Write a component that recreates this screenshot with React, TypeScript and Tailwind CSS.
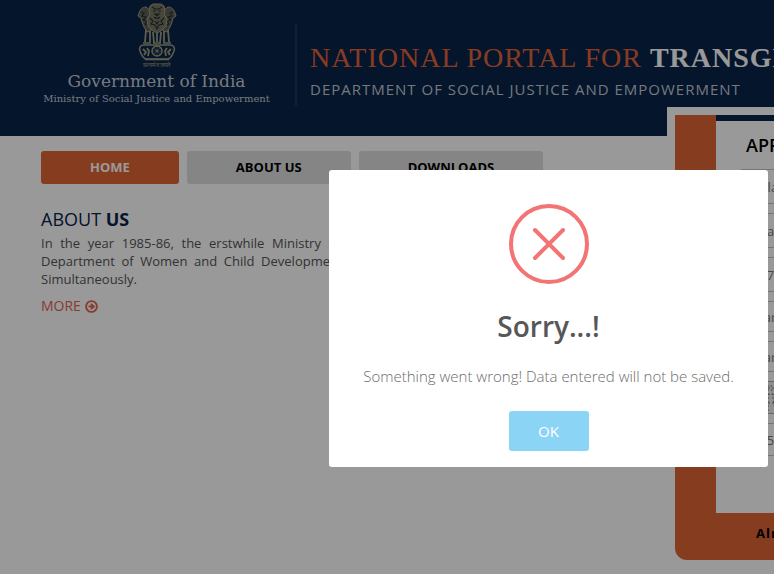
import { CircleArrowRight } from "lucide-react";

const navItems = ["HOME", "ABOUT US", "DOWNLOADS"];

const fields = [
  { label: "First name", value: "Bala", height: "h-[35px]" },
  { label: "Last name", value: "Mia", height: "h-[35px]" },
  { label: "Mobile number", value: "9876543210", height: "h-[35px]" },
  { label: "District", value: "Margao", height: "h-[31px]" },
  { label: "City", value: "Margao", height: "h-[31px]" },
];

function Emblem() {
  return (
    <svg viewBox="0 0 40 58" className="h-[58px] w-[40px]" fill="none" stroke="#a09e80" aria-hidden="true">
      {/* side lions */}
      <path d="M9 4c-4 0-6 3-7 6l-1 3 3 2 1 4 2 5 3 5 4-1V8z" fill="#5c5f58" strokeWidth="1" />
      <path d="M31 4c4 0 6 3 7 6l1 3-3 2-1 4-2 5-3 5-4-1V8z" fill="#5c5f58" strokeWidth="1" />
      <path d="M4 9l3 1-2 3 4 1-3 3 4 1-2 3 4 2M36 9l-3 1 2 3-4 1 3 3-4 1 2 3-4 2" stroke="#262f3c" strokeWidth="1.2" />
      {/* front lion */}
      <path d="M13 3l3-2h8l3 2 1 5-1 3 3 5-1 7-5 5-4 2-4-2-5-5-1-7 3-5-1-3z" fill="#77765f" strokeWidth="1" />
      <path d="M15 4l3 2h4l3-2M16 8h3m2 0h3M18 11h4l-2 2zM17 14c2 2 4 2 6 0M13 15l3 3-2 3 4 1 2 4 2-4 4-1-2-3 3-3M18 18l2 3 2-3" stroke="#232e3c" strokeWidth="1.2" />
      {/* legs */}
      <path d="M9 27l-1 12M13 28v11M16 29l1 11M20 30v9M24 29l-1 11M27 28v11M31 27l1 12" strokeWidth="1.8" />
      <path d="M6 40h8m2 0h8m2 0h8" strokeWidth="1.5" />
      {/* abacus with wheel */}
      <path d="M7 42h26c4 0 5 3 4 6s-3 7-6 8H9c-3-1-5-5-6-8s0-6 4-6z" strokeWidth="1.5" />
      <circle cx="20" cy="48" r="5" strokeWidth="1.5" />
      <circle cx="20" cy="48" r="1.2" fill="#a09e80" stroke="none" />
      <path d="M20 43v10M15 48h10M16.5 44.5l7 7M23.5 44.5l-7 7" strokeWidth=".5" />
      <path d="M6 46l3 3-2 3m3-7l2 3-1 5M34 46l-3 3 2 3m-3-7l-2 3 1 5" strokeWidth="1.8" />
      <path d="M8 56.5h24" strokeWidth="1.5" />
    </svg>
  );
}

function Header() {
  return (
    <header className="flex h-[136px] items-start bg-[#08234a] pl-[41px]">
      <div className="flex w-[231px] shrink-0 flex-col items-center whitespace-nowrap pt-[3px] font-['DejaVu_Serif','Liberation_Serif',serif] text-[#c9ccd4]">
        <Emblem />
        <span className="text-[6px] leading-[8px] text-[#a09e80]">सत्यमेव जयते</span>
        <span className="text-[17px] leading-[24px]">Government of India</span>
        <span className="text-[10px] leading-[12px]">Ministry of Social Justice and Empowerment</span>
      </div>
      <div className="ml-[23px] mt-6 h-[82px] w-[2px] shrink-0 bg-[#1a3260]" />
      <div className="ml-[13px] whitespace-nowrap pt-[40px]">
        <h1 className="font-['Liberation_Serif',serif] text-[28px] leading-[36px] tracking-[1px] text-[#e2653a]">
          NATIONAL PORTAL FOR <span className="font-bold text-white">TRANSGENDER PERSONS</span>
        </h1>
        <p className="text-[15px] leading-[26px] tracking-[1px] text-[#c3c8d2]">
          DEPARTMENT OF SOCIAL JUSTICE AND EMPOWERMENT
        </p>
      </div>
    </header>
  );
}

function RegistrationCard() {
  return (
    <aside className="-mt-[29px] w-[420px] shrink-0 bg-white pl-2 pt-2">
      <form className="rounded-bl-[12px] bg-[#df6435] pl-[41px]">
        <div className="box-content h-[392px] border-t-[6px] border-[#08234a] bg-white pl-[25px] pr-6">
          <h2 className="pl-[5px] text-[18px] font-semibold leading-[48px] text-black">APPLY ONLINE</h2>
          <div className="flex flex-col gap-[9px]">
            {fields.map((f) => (
              <input
                key={f.label}
                aria-label={f.label}
                defaultValue={f.value}
                className={`${f.height} w-full border border-[#c4c4c4] bg-white px-[10px] text-[13px] text-[#777]`}
              />
            ))}
            <div className="flex h-[33px] w-[110px] items-center justify-center border border-[#aaa] bg-[#eee]" aria-hidden="true">
              <svg viewBox="0 0 80 30" className="h-[30px] w-[80px]" stroke="#777" strokeWidth="1" strokeDasharray="2 2" fill="none">
                <path d="M0 5h80M0 11l80 3M4 20h76M12 2v26M15 2l4 26M24 3v25" />
              </svg>
            </div>
            <input
              aria-label="Captcha"
              defaultValue="24517"
              className="h-[33px] w-full border border-[#c4c4c4] bg-white px-[10px] text-[13px] text-[#777]"
            />
          </div>
        </div>
        <p className="whitespace-nowrap pb-[7px] pl-10 text-[13px] font-bold leading-[40px] tracking-[1px] text-black">
          Already Registered? <a href="#login">Login</a>
        </p>
      </form>
    </aside>
  );
}

function Alert() {
  return (
    <div className="fixed inset-0 flex items-start justify-end bg-black/40 pr-[6px] pt-[170px]">
      <div role="alertdialog" aria-labelledby="alert-title" className="flex w-[439px] flex-col items-center rounded-[3px] bg-white pb-4 pt-[34px]">
        <svg viewBox="0 0 80 80" className="h-20 w-20" fill="none" stroke="#f27474" strokeWidth="4" aria-hidden="true">
          <circle cx="40" cy="40" r="38" />
          <path d="M26 26l28 28M54 26L26 54" strokeLinecap="round" />
        </svg>
        <h2 id="alert-title" className="mt-5 text-[28px] font-semibold leading-[44px] text-[#575757]">Sorry...!</h2>
        <p className="mt-4 whitespace-nowrap text-[15px] font-light leading-[24px] text-[#6c6c6c]">
          Something went wrong! Data entered will not be saved.
        </p>
        <button className="mt-[23px] h-10 w-20 rounded-[3px] bg-[#8cd4f5] text-[15px] text-white">OK</button>
      </div>
    </div>
  );
}

export default function App() {
  return (
    <div className="min-h-screen overflow-hidden bg-white font-['Open_Sans','Noto_Sans',sans-serif]">
      <Header />
      <div className="flex">
        <main className="w-[667px] shrink-0 pl-[41px] pt-[15px]">
          <nav className="flex gap-2">
            {navItems.map((item, i) => (
              <a
                key={item}
                href={`#${item}`}
                className={`rounded-[3px] px-[49px] text-[13px] font-bold leading-[33px] ${i === 0 ? "bg-[#df6435] text-white" : "bg-[#dedede] text-black"}`}
              >
                {item}
              </a>
            ))}
          </nav>
          <h2 className="mt-[21px] text-[18px] leading-[28px] text-[#08234a]">
            ABOUT <b>US</b>
          </h2>
          <p className="mt-px w-[514px] text-justify text-[13px] leading-[18px] text-[#555]">
            In the year 1985-86, the erstwhile Ministry of Welfare was bifurcated into the Department of Women and Child
            Development and the Department of Welfare. Simultaneously.
          </p>
          <a href="#more" className="mt-[7px] flex items-center gap-1 text-[14px] leading-[22px] text-[#df6450]">
            MORE <CircleArrowRight className="h-[13px] w-[13px]" strokeWidth={3.5} />
          </a>
        </main>
        <RegistrationCard />
      </div>
      <Alert />
    </div>
  );
}
